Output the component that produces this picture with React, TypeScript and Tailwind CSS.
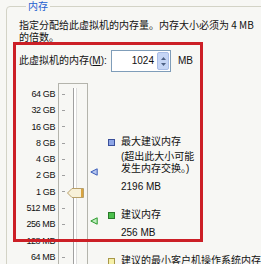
const scale = ['64 GB', '32 GB', '16 GB', '8 GB', '4 GB', '2 GB', '1 GB', '512 MB', '256 MB', '128 MB', '64 MB']

function Square({ fill, edge }: { fill: string; edge: string }) {
  return (
    <svg width="7" height="7" viewBox="0 0 7 7" className="shrink-0">
      <rect x="0.5" y="0.5" width="6" height="6" fill={fill} stroke={edge} />
    </svg>
  )
}

function Marker({ fill, edge }: { fill: string; edge: string }) {
  return (
    <svg width="8" height="8" viewBox="0 0 8 8">
      <polygon points="0.8,4 7.2,0.8 7.2,7.2" fill={fill} stroke={edge} strokeLinejoin="round" />
    </svg>
  )
}

export default function App() {
  return (
    <div
      className="relative w-[261px] h-[264px] overflow-hidden bg-[#f7f7f4] text-[10px] leading-[12px] text-[#111]"
      style={{ fontFamily: '"Liberation Sans", "Noto Sans CJK SC", sans-serif' }}
    >
      <fieldset className="ml-[6px] w-[280px] h-[300px] border border-[#d3d3c6] rounded-[4px] pl-[12px] pt-[6px]">
        <legend className="ml-[7px] px-[2px] text-[#2460d0] leading-[13px]">内存</legend>

        {/* description */}
        <p className="w-[240px] leading-[12px]" style={{ fontFamily: '"Noto Sans CJK SC", sans-serif' }}>
          指定分配给此虚拟机的内存量。内存大小必须为 4 MB 的倍数。
        </p>

        {/* memory amount */}
        <div className="flex items-center mt-[7px] h-[22px]">
          <span className="w-[92px]">
            此虚拟机的内存(<span className="underline">M</span>):
          </span>
          <div className="flex items-center w-[60px] h-[22px] bg-white border border-[#7f9db9] pl-1 pr-[1px]">
            <span className="flex-1 text-right pr-[3px] text-[10px]">1024</span>
            <div className="flex flex-col w-[12px] h-[18px] rounded-[2px] bg-[#c5d5f5] border border-[#a9bde6] items-center justify-center gap-[3px]">
              <svg width="5" height="3" viewBox="0 0 5 3">
                <polygon points="2.5,0 5,3 0,3" fill="#4d6185" />
              </svg>
              <svg width="5" height="3" viewBox="0 0 5 3">
                <polygon points="0,0 5,0 2.5,3" fill="#4d6185" />
              </svg>
            </div>
          </div>
          <span className="ml-[7px]">MB</span>
        </div>

        {/* slider area */}
        <div className="flex mt-[11px]">
          <div className="w-[36px] pt-[3px] text-[9px] tracking-[-0.4px] text-right">
            {scale.map(s => (
              <div key={s} className="h-[16.3px] leading-[16.3px] whitespace-nowrap">{s}</div>
            ))}
          </div>

          <div className="relative ml-[3px] w-[30px] h-[200px] border border-[#b4b4ac]">
            <div className="pt-[2px]">
              {scale.map(s => (
                <div key={s} className="h-[16.3px] flex items-center pl-[3px]">
                  <div className="w-[3px] h-[1px] bg-[#a0a0a0]" />
                </div>
              ))}
            </div>
            <div className="absolute left-[14px] top-[4px] bottom-0 w-[4px] border-l border-[#a0a0a0] border-r border-r-[#dcdcdc] bg-white" />
            <svg className="absolute left-[8px] top-[104px]" width="17" height="10" viewBox="0 0 17 10">
              <polygon points="0.5,5 5,0.5 16.5,0.5 16.5,9.5 5,9.5" fill="#f7f0d8" stroke="#b9a06a" />
              <rect x="14" y="1" width="2" height="8" fill="#d9a440" />
            </svg>
          </div>

          <div className="relative w-[20px]">
            <div className="absolute left-[2px] top-[85px]">
              <Marker fill="#b8c8f0" edge="#3a5cb8" />
            </div>
            <div className="absolute left-[2px] top-[134px]">
              <Marker fill="#c0ecc0" edge="#2a9a2a" />
            </div>
          </div>

          <div className="pt-[53px]">
            <div className="flex items-center gap-[6px]">
              <Square fill="#8ea6e6" edge="#3a4f9a" />
              <span>最大建议内存</span>
            </div>
            <div className="pl-[13px] mt-[3px]">
              <div>(超出此大小可能</div>
              <div>发生内存交换。)</div>
              <div className="mt-[6px]">2196 MB</div>
            </div>
            <div className="flex items-center gap-[6px] mt-[16px]">
              <Square fill="#4cc04c" edge="#2a7a2a" />
              <span>建议内存</span>
            </div>
            <div className="pl-[13px] mt-[6px]">256 MB</div>
            <div className="flex items-center gap-[6px] mt-[16px]">
              <Square fill="#f6f0a8" edge="#a89848" />
              <span className="whitespace-nowrap">建议的最小客户机操作系统内存</span>
            </div>
          </div>
        </div>
      </fieldset>

      {/* red annotation frame */}
      <div className="absolute left-[13px] top-[42px] w-[190px] h-[200px] border-[3px] border-[#cc1f26]" />
    </div>
  )
}
